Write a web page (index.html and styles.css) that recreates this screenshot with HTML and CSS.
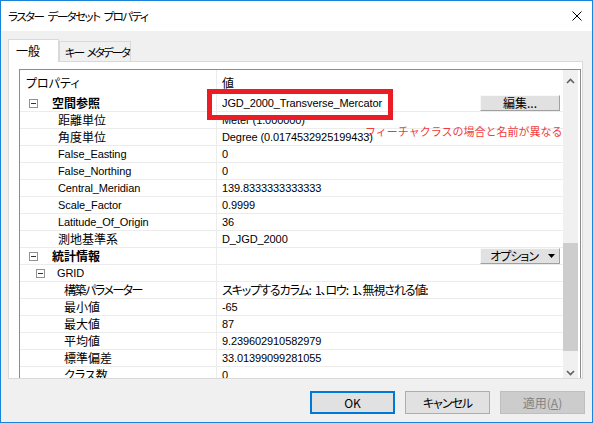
FILE: index.html
```html
<!DOCTYPE html>
<html lang="ja">
<head>
<meta charset="utf-8">
<title>ラスター データセット プロパティ</title>
<link rel="stylesheet" href="styles.css">
</head>
<body>
<div class="window">
  <div class="titlebar">
    <span class="title">ラスター データセット プロパティ</span>
    <svg class="close" width="10" height="10" viewBox="0 0 10 10"><path d="M0.5 0.5L9.5 9.5M9.5 0.5L0.5 9.5" stroke="#000" stroke-width="1" fill="none"/></svg>
  </div>
  <div class="tabs">
    <div class="tab active">一般</div>
    <div class="tab"><span class="tight2">キー メタデータ</span></div>
  </div>
  <div class="panel">
    <div class="grid">
      <div class="rows">
        <div class="row header"><div class="name hdr">プロパティ</div><div class="value">値</div></div>
        <div class="row"><div class="name l0"><span class="exp"></span><b>空間参照</b></div><div class="value"><span class="en">JGD_2000_Transverse_Mercator</span><button class="cellbtn">編集...</button></div></div>
        <div class="row"><div class="name l1">距離単位</div><div class="value"><span class="en">Meter (1.000000)</span></div></div>
        <div class="row"><div class="name l1">角度単位</div><div class="value"><span class="en">Degree (0.0174532925199433)</span></div></div>
        <div class="row"><div class="name l1"><span class="en">False_Easting</span></div><div class="value"><span class="en">0</span></div></div>
        <div class="row"><div class="name l1"><span class="en">False_Northing</span></div><div class="value"><span class="en">0</span></div></div>
        <div class="row"><div class="name l1"><span class="en">Central_Meridian</span></div><div class="value"><span class="en">139.8333333333333</span></div></div>
        <div class="row"><div class="name l1"><span class="en">Scale_Factor</span></div><div class="value"><span class="en">0.9999</span></div></div>
        <div class="row"><div class="name l1"><span class="en">Latitude_Of_Origin</span></div><div class="value"><span class="en">36</span></div></div>
        <div class="row"><div class="name l1">測地基準系</div><div class="value"><span class="en">D_JGD_2000</span></div></div>
        <div class="row"><div class="name l0"><span class="exp"></span><b>統計情報</b></div><div class="value"><button class="cellbtn opt"><span class="tight1">オプション</span><svg class="tri" width="7" height="4" viewBox="0 0 7 4"><path d="M0 0H7L3.5 4Z" fill="#000"/></svg></button></div></div>
        <div class="row"><div class="name l1e"><span class="exp"></span><span class="en">GRID</span></div><div class="value"></div></div>
        <div class="row"><div class="name l2"><span class="tight15">構築パラメーター</span></div><div class="value"><span class="tightv">スキップするカラム: 1、ロウ: 1、無視される値:</span></div></div>
        <div class="row"><div class="name l2">最小値</div><div class="value"><span class="en">-65</span></div></div>
        <div class="row"><div class="name l2">最大値</div><div class="value"><span class="en">87</span></div></div>
        <div class="row"><div class="name l2">平均値</div><div class="value"><span class="en">9.239602910582979</span></div></div>
        <div class="row"><div class="name l2">標準偏差</div><div class="value"><span class="en">33.01399099281055</span></div></div>
        <div class="row"><div class="name l2">クラス数</div><div class="value"><span class="en">0</span></div></div>
      </div>
      <div class="scrollbar">
        <div class="sb-btn"><svg width="9" height="6" viewBox="0 0 9 6"><path d="M1 5L4.5 1.5L8 5" stroke="#606060" stroke-width="1.6" fill="none"/></svg></div>
        <div class="sb-thumb"></div>
        <div class="sb-btn sb-down"><svg width="9" height="6" viewBox="0 0 9 6"><path d="M1 1L4.5 4.5L8 1" stroke="#606060" stroke-width="1.6" fill="none"/></svg></div>
      </div>
    </div>
  </div>
  <div class="buttons">
    <button class="btn default">OK</button>
    <button class="btn"><span class="tight1">キャンセル</span></button>
    <button class="btn" disabled>適用(<u>A</u>)</button>
  </div>
  <div class="callout-box"></div>
  <div class="callout-text">フィーチャクラスの場合と名前が異なる</div>
</div>
</body>
</html>
```
FILE: styles.css
```css
* { box-sizing: border-box; }
html, body { margin: 0; padding: 0; background: #fff; }
body {
  font-family: "Noto Sans CJK JP", sans-serif;
  font-size: 12px;
  color: #000;
  font-feature-settings: "palt";
}
.window {
  position: relative;
  width: 593px;
  height: 423px;
  border: 1px solid #1883d7;
  background: #f0f0f0;
  display: flex;
  flex-direction: column;
  overflow: hidden;
}
.titlebar {
  height: 30px;
  flex: none;
  background: #fff;
  display: flex;
  align-items: center;
  justify-content: space-between;
  padding: 0 10px 0 7px;
}
.title { font-size: 11.5px; line-height: 16px; letter-spacing: -1.5px; word-spacing: 3px; }
.close { display: block; }
.tight1 { letter-spacing: -1px; }
.tight15 { letter-spacing: -1.5px; }
.tight2 { font-size: 11.5px; letter-spacing: -2px; word-spacing: 3px; }
.tightv { letter-spacing: -1.1px; word-spacing: 2.5px; }
.tabs {
  height: 30px;
  flex: none;
  display: flex;
  align-items: flex-end;
  padding: 8px 0 0 7px;
}
.tab {
  height: 20px;
  width: 72px;
  border: 1px solid #d9d9d9;
  border-bottom: none;
  padding-left: 5px;
  line-height: 19px;
  background: #f0f0f0;
  white-space: nowrap;
}
.tab.active {
  width: 51px;
  height: 23px;
  margin-bottom: -1px;
  padding-left: 7px;
  line-height: 21px;
  background: #fff;
  position: relative;
  z-index: 1;
}
.panel {
  flex: none;
  margin-left: 7px;
  width: 575px;
  height: 318px;
  background: #fff;
  border: 1px solid #d9d9d9;
  overflow: hidden;
  padding: 7px 1px 0 10px;
}
.grid {
  width: 562px;
  height: 315px;
  border: 1px solid #8c8c8c;
  border-bottom: none;
  display: flex;
}
.rows { flex: 1; min-width: 0; }
.row {
  display: flex;
  height: 17px;
  border-bottom: 1px solid #ececec;
  line-height: 16px;
  white-space: nowrap;
}
.row.header { height: 25px; border-bottom: none; }
.name {
  width: 197px;
  flex: none;
  border-right: 1px solid #ececec;
  display: flex;
  align-items: center;
}
.value {
  flex: 1;
  min-width: 0;
  display: flex;
  align-items: center;
  padding-left: 5px;
}
.hdr { padding-left: 6px; }
.l0 { padding-left: 9px; }
.l0 .exp { margin-right: 14px; }
.l1 { padding-left: 38px; }
.l1e { padding-left: 16px; }
.l1e .exp { margin-right: 12px; }
.l2 { padding-left: 44px; }
.exp {
  width: 9px;
  height: 9px;
  border: 1px solid #919191;
  position: relative;
  flex: none;
}
.exp::after {
  content: "";
  position: absolute;
  left: 1px;
  top: 3px;
  width: 5px;
  height: 1px;
  background: #333;
}
b { font-weight: 700; }
.en {
  font-family: "Liberation Sans", sans-serif;
  font-size: 11px;
  letter-spacing: -0.1px;
}
.cellbtn {
  margin-left: auto;
  margin-right: 3px;
  width: 80px;
  height: 16px;
  padding: 0;
  background: #e1e1e1;
  border: 1px solid;
  border-color: #f8f8f8 #a0a0a0 #a0a0a0 #f8f8f8;
  font: inherit;
  font-size: 12px;
  line-height: 14px;
  font-feature-settings: "palt";
  color: #000;
}
.cellbtn.opt {
  display: flex;
  align-items: center;
  justify-content: flex-end;
  padding-right: 4px;
}
.tri { margin-left: 10px; display: block; }
.scrollbar {
  width: 15px;
  margin-right: 2px;
  flex: none;
  background: #f0f0f0;
  display: flex;
  flex-direction: column;
}
.sb-btn {
  height: 22px;
  flex: none;
  display: flex;
  align-items: center;
  justify-content: center;
}
.sb-btn svg { display: block; }
.sb-thumb {
  margin-top: 151px;
  height: 108px;
  flex: none;
  background: #cdcdcd;
}
.sb-down { margin-top: auto; }
.buttons {
  display: flex;
  justify-content: flex-end;
  gap: 10px;
  padding: 12px 7px 0 0;
}
.btn {
  width: 85px;
  height: 23px;
  padding: 0;
  background: #e1e1e1;
  border: 1px solid #adadad;
  font: inherit;
  font-size: 12px;
  font-feature-settings: "palt";
  color: #000;
}
.btn.default { border: 2px solid #0078d7; }
.btn:disabled {
  background: #cccccc;
  border-color: #bfbfbf;
  color: #838383;
}
.callout-box {
  position: absolute;
  left: 206px;
  top: 88px;
  width: 186px;
  height: 31px;
  border: 5px solid #ec1c24;
}
.callout-text {
  position: absolute;
  left: 364px;
  top: 123px;
  font-size: 11px;
  line-height: 14px;
  color: #f23b3b;
  font-feature-settings: normal;
  white-space: nowrap;
}
```
